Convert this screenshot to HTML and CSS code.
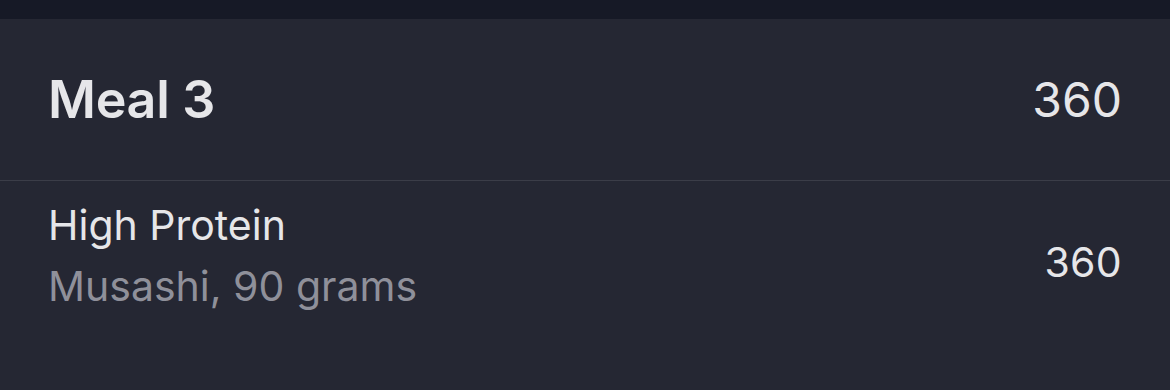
FILE: index.html
```html
<!DOCTYPE html>
<html>
<head>
<meta charset="utf-8">
<link rel="stylesheet" href="styles.css">
</head>
<body>
<div class="topbar"></div>
<section class="meal">
  <div class="meal-head">
    <h2 class="meal-title">Meal 3</h2>
    <span class="meal-total">360</span>
  </div>
  <div class="item">
    <div class="item-text">
      <div class="item-name">High Protein</div>
      <div class="item-sub">Musashi, 90 grams</div>
    </div>
    <span class="item-cal">360</span>
  </div>
</section>
</body>
</html>
```
FILE: styles.css
```css
html, body {
  margin: 0;
  padding: 0;
  background: #252733;
  font-family: Inter, "Noto Sans", sans-serif;
  color: #e6e6e9;
}
.topbar {
  height: 19px;
  background: #161926;
}
.meal-head {
  height: 161px;
  display: flex;
  align-items: center;
  justify-content: space-between;
  padding: 0 48px;
  border-bottom: 1px solid #3b3d48;
}
.meal-title {
  margin: 0;
  font-size: 52px;
  font-weight: 600;
  letter-spacing: -0.3px;
}
.meal-total {
  font-size: 48px;
  font-weight: 400;
}
.item {
  display: flex;
  align-items: center;
  justify-content: space-between;
  padding: 19px 48px 18px 48px;
}
.item-name {
  font-size: 41px;
  line-height: 50px;
}
.item-sub {
  font-size: 41px;
  line-height: 72px;
  color: #8f909a;
}
.item-cal {
  font-size: 41px;
  letter-spacing: 0.3px;
  margin-top: 2px;
}
```
